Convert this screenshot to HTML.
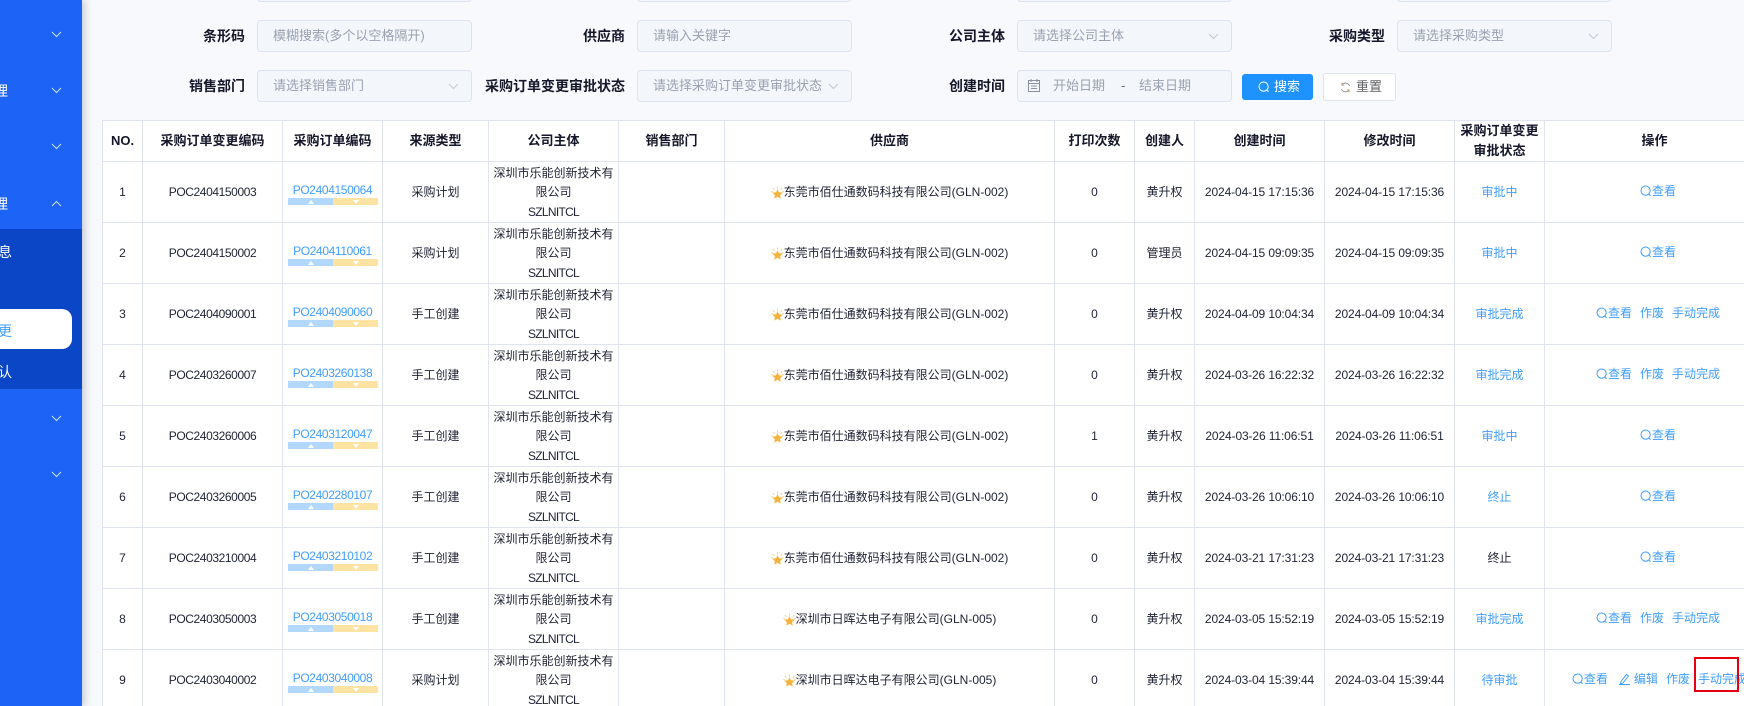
<!DOCTYPE html>
<html lang="zh"><head><meta charset="utf-8"><title>采购订单变更</title>
<style>
*{box-sizing:border-box}
html,body{margin:0;padding:0;width:1744px;height:706px;overflow:hidden;background:#f7f9fc;font-family:"Liberation Sans","Noto Sans CJK SC",sans-serif;color:#1f2233}
#wrap{position:relative;width:1744px;height:706px;overflow:hidden;background:#f7f9fc}
#side{position:absolute;left:0;top:0;width:82px;height:706px;background:#1d63f6;box-shadow:2px 0 8px rgba(40,50,80,.28);overflow:hidden;z-index:3}
#side .sub{position:absolute;left:0;top:229px;width:82px;height:160px;background:#0b46c6}
#side .pill{position:absolute;left:-20px;top:309px;width:92px;height:40px;background:#fff;border-radius:10px}
#side span{position:absolute;font-size:14px;line-height:20px;color:#fff}
#side svg{position:absolute;left:51px;width:11px;height:7px}
.lb{position:absolute;font-size:14px;font-weight:700;line-height:20px;text-align:right;white-space:nowrap;color:#15172a}
.in{position:absolute;width:215px;height:32px;background:#f3f6fb;border:1px solid #dce3f1;border-radius:4px;font-size:13px;line-height:30px;padding-left:15px;color:#9aa1b2;white-space:nowrap}
.in svg.c{position:absolute;right:12px;top:12px;width:11px;height:7px}
.btn{position:absolute;font-size:13px;line-height:26px;border-radius:3px}
table{position:absolute;left:102px;top:120px;width:1663px;table-layout:fixed;border-collapse:separate;border-spacing:0;background:#fff;border-left:1px solid #dfe4f0;border-top:1px solid #dfe4f0}
th,td{border-right:1px solid #dfe4f0;border-bottom:1px solid #dfe4f0;padding:0;text-align:center;font-size:12px;position:relative;line-height:20px;overflow:hidden}
th{font-size:13px;font-weight:700;height:41px;color:#15172a}
td{height:61px;padding-top:1.500px;line-height:19.500px}
td:nth-child(2){letter-spacing:-.4px}
td:nth-child(10),td:nth-child(11){letter-spacing:-.12px}
.z{letter-spacing:-.7px}
.po{position:absolute;left:0;right:0;top:18px;color:#409eff;line-height:20px;font-size:12px;letter-spacing:-.38px}
.bar{position:absolute;left:5px;top:36px;width:90px;height:7px;background:linear-gradient(90deg,#b3d8ff 50%,#ffe3a3 50%)}
.bar:before,.bar:after{content:"";position:absolute;top:1.500px;border-left:3px solid transparent;border-right:3px solid transparent}
.bar:before{left:20px;border-bottom:4px solid #fff}
.bar:after{left:65px;border-top:4px solid #fff}
.st{color:#409eff}
.star{width:13px;height:13px;vertical-align:-3px;margin-right:0}
td.op{text-align:left;white-space:nowrap;color:#409eff;line-height:20px}
td.op div{position:absolute;top:19px;white-space:nowrap}
td.op a{margin-right:8px}
td.op svg{width:12px;height:12px;vertical-align:-2px;margin-right:0}
#red{position:absolute;left:1694px;top:657px;width:45px;height:35px;border:2px solid #e60012;z-index:4}
</style></head><body>
<div id="wrap">
<svg width="0" height="0" style="position:absolute"><defs>
<symbol id="q" viewBox="0 0 12 12"><circle cx="5.600" cy="5.600" r="4.600" fill="none" stroke="currentColor" stroke-width="1"/><path d="M8.800 9l1.800 1.800" stroke="currentColor" stroke-width="1" fill="none"/></symbol>
<symbol id="s" viewBox="0 0 13 13"><path d="M6.500 3.200l1.500 3 3.800.4-2.700 2.500.7 3.500-3.300-1.800-3.300 1.800.7-3.500L1.200 6.600 5 6.200z" fill="#f5b23d"/><path d="M6.500 .4v2.200M1.800 2l1.500 1.800M11.200 2L9.700 3.800M.3 5.400l1.700.6M12.700 5.400L11 6" stroke="#fad48a" stroke-width="1" fill="none"/></symbol>
<symbol id="d" viewBox="0 0 11 7"><path d="M1 1l4.500 4.500L10 1" fill="none" stroke="currentColor" stroke-width="1"/></symbol>
</defs></svg>

<div id="side">
<div class="sub"></div><div class="pill"></div>
<span style="left:-6px;top:81px">理</span>
<span style="left:-6px;top:194px">理</span>
<span style="left:-2px;top:242px">息</span>
<span style="left:-2px;top:321px;color:#409eff">更</span>
<span style="left:-2px;top:362px">认</span>
<svg viewBox="0 0 11 7" style="top:31px;color:#cfe0ff"><use href="#d"/></svg>
<svg viewBox="0 0 11 7" style="top:87px;color:#cfe0ff"><use href="#d"/></svg>
<svg viewBox="0 0 11 7" style="top:143px;color:#cfe0ff"><use href="#d"/></svg>
<svg viewBox="0 0 11 7" style="top:200px;color:#cfe0ff;transform:scaleY(-1)"><use href="#d"/></svg>
<svg viewBox="0 0 11 7" style="top:415px;color:#cfe0ff"><use href="#d"/></svg>
<svg viewBox="0 0 11 7" style="top:471px;color:#cfe0ff"><use href="#d"/></svg>
</div>

<div class="in" style="left:257px;top:-30px"></div>
<div class="in" style="left:637px;top:-30px"></div>
<div class="in" style="left:1017px;top:-30px"></div>
<div class="in" style="left:1397px;top:-30px"></div>

<div class="lb" style="right:1499px;top:26px">条形码</div>
<div class="in" style="left:257px;top:20px">模糊搜索(多个以空格隔开)</div>
<div class="lb" style="right:1119px;top:26px">供应商</div>
<div class="in" style="left:637px;top:20px">请输入关键字</div>
<div class="lb" style="right:739px;top:26px">公司主体</div>
<div class="in" style="left:1017px;top:20px">请选择公司主体<svg class="c" style="color:#c3c8d4"><use href="#d"/></svg></div>
<div class="lb" style="right:359px;top:26px">采购类型</div>
<div class="in" style="left:1397px;top:20px">请选择采购类型<svg class="c" style="color:#c3c8d4"><use href="#d"/></svg></div>

<div class="lb" style="right:1499px;top:76px">销售部门</div>
<div class="in" style="left:257px;top:70px">请选择销售部门<svg class="c" style="color:#c3c8d4"><use href="#d"/></svg></div>
<div class="lb" style="right:1119px;top:76px">采购订单变更审批状态</div>
<div class="in" style="left:637px;top:70px">请选择采购订单变更审批状态<svg class="c" style="color:#c3c8d4"><use href="#d"/></svg></div>
<div class="lb" style="right:739px;top:76px">创建时间</div>
<div class="in" style="left:1017px;top:70px;padding-left:0">
<svg width="12" height="13" viewBox="0 0 12 13" style="position:absolute;left:10px;top:8px" fill="none" stroke="#8b91a3"><rect x=".5" y="1.500" width="11" height="11"/><path d="M.5 4.500h11M3 0v3M9 0v3M3 7h6M3 9.500h6"/></svg>
<span style="position:absolute;left:35px">开始日期</span><span style="position:absolute;left:103px;color:#666">-</span><span style="position:absolute;left:121px">结束日期</span>
</div>
<div class="btn" style="left:1242px;top:74px;width:71px;height:26px;background:#1e92ff;color:#fff">
<svg width="12" height="12" viewBox="0 0 12 12" style="position:absolute;left:16px;top:7px;color:#fff"><use href="#q"/></svg>
<span style="position:absolute;left:32px">搜索</span></div>
<div class="btn" style="left:1323px;top:73px;width:73px;height:28px;background:#fff;border:1px solid #dfe3ec;color:#606266">
<svg width="11" height="11" viewBox="0 0 12 12" style="position:absolute;left:16px;top:8px" fill="none" stroke="#8a8f99"><path d="M10.500 4.500A5 5 0 0 0 2 3M1.500 7.500A5 5 0 0 0 10 9"/><path d="M2 .8V3.300h2.500M10 11.200V8.700H7.500" stroke="#c99a5a"/></svg>
<span style="position:absolute;left:32px;top:0">重置</span></div>

<table>
<colgroup><col style="width:40px"><col style="width:140px"><col style="width:100px"><col style="width:106px"><col style="width:130px"><col style="width:106px"><col style="width:330px"><col style="width:80px"><col style="width:60px"><col style="width:130px"><col style="width:130px"><col style="width:90px"><col style="width:220px"></colgroup>
<tr><th>NO.</th><th>采购订单变更编码</th><th>采购订单编码</th><th>来源类型</th><th>公司主体</th><th>销售部门</th><th>供应商</th><th>打印次数</th><th>创建人</th><th>创建时间</th><th>修改时间</th><th>采购订单变更<br>审批状态</th><th>操作</th></tr>

<tr><td>1</td><td>POC2404150003</td><td><div class="po">PO2404150064</div><i class="bar"></i></td><td>采购计划</td><td>深圳市乐能创新技术有<br>限公司<br><span class="z">SZLNITCL</span></td><td></td><td><svg class="star"><use href="#s"/></svg>东莞市佰仕通数码科技有限公司(GLN-002)</td><td>0</td><td>黄升权</td><td>2024-04-15 17:15:36</td><td>2024-04-15 17:15:36</td><td class="st">审批中</td><td class="op"><div style="left:95px"><a><svg><use href="#q"/></svg>查看</a></div></td></tr>

<tr><td>2</td><td>POC2404150002</td><td><div class="po">PO2404110061</div><i class="bar"></i></td><td>采购计划</td><td>深圳市乐能创新技术有<br>限公司<br><span class="z">SZLNITCL</span></td><td></td><td><svg class="star"><use href="#s"/></svg>东莞市佰仕通数码科技有限公司(GLN-002)</td><td>0</td><td>管理员</td><td>2024-04-15 09:09:35</td><td>2024-04-15 09:09:35</td><td class="st">审批中</td><td class="op"><div style="left:95px"><a><svg><use href="#q"/></svg>查看</a></div></td></tr>

<tr><td>3</td><td>POC2404090001</td><td><div class="po">PO2404090060</div><i class="bar"></i></td><td>手工创建</td><td>深圳市乐能创新技术有<br>限公司<br><span class="z">SZLNITCL</span></td><td></td><td><svg class="star"><use href="#s"/></svg>东莞市佰仕通数码科技有限公司(GLN-002)</td><td>0</td><td>黄升权</td><td>2024-04-09 10:04:34</td><td>2024-04-09 10:04:34</td><td class="st">审批完成</td><td class="op"><div style="left:51px"><a><svg><use href="#q"/></svg>查看</a><a>作废</a><a>手动完成</a></div></td></tr>

<tr><td>4</td><td>POC2403260007</td><td><div class="po">PO2403260138</div><i class="bar"></i></td><td>手工创建</td><td>深圳市乐能创新技术有<br>限公司<br><span class="z">SZLNITCL</span></td><td></td><td><svg class="star"><use href="#s"/></svg>东莞市佰仕通数码科技有限公司(GLN-002)</td><td>0</td><td>黄升权</td><td>2024-03-26 16:22:32</td><td>2024-03-26 16:22:32</td><td class="st">审批完成</td><td class="op"><div style="left:51px"><a><svg><use href="#q"/></svg>查看</a><a>作废</a><a>手动完成</a></div></td></tr>

<tr><td>5</td><td>POC2403260006</td><td><div class="po">PO2403120047</div><i class="bar"></i></td><td>手工创建</td><td>深圳市乐能创新技术有<br>限公司<br><span class="z">SZLNITCL</span></td><td></td><td><svg class="star"><use href="#s"/></svg>东莞市佰仕通数码科技有限公司(GLN-002)</td><td>1</td><td>黄升权</td><td>2024-03-26 11:06:51</td><td>2024-03-26 11:06:51</td><td class="st">审批中</td><td class="op"><div style="left:95px"><a><svg><use href="#q"/></svg>查看</a></div></td></tr>

<tr><td>6</td><td>POC2403260005</td><td><div class="po">PO2402280107</div><i class="bar"></i></td><td>手工创建</td><td>深圳市乐能创新技术有<br>限公司<br><span class="z">SZLNITCL</span></td><td></td><td><svg class="star"><use href="#s"/></svg>东莞市佰仕通数码科技有限公司(GLN-002)</td><td>0</td><td>黄升权</td><td>2024-03-26 10:06:10</td><td>2024-03-26 10:06:10</td><td class="st">终止</td><td class="op"><div style="left:95px"><a><svg><use href="#q"/></svg>查看</a></div></td></tr>

<tr><td>7</td><td>POC2403210004</td><td><div class="po">PO2403210102</div><i class="bar"></i></td><td>手工创建</td><td>深圳市乐能创新技术有<br>限公司<br><span class="z">SZLNITCL</span></td><td></td><td><svg class="star"><use href="#s"/></svg>东莞市佰仕通数码科技有限公司(GLN-002)</td><td>0</td><td>黄升权</td><td>2024-03-21 17:31:23</td><td>2024-03-21 17:31:23</td><td>终止</td><td class="op"><div style="left:95px"><a><svg><use href="#q"/></svg>查看</a></div></td></tr>

<tr><td>8</td><td>POC2403050003</td><td><div class="po">PO2403050018</div><i class="bar"></i></td><td>手工创建</td><td>深圳市乐能创新技术有<br>限公司<br><span class="z">SZLNITCL</span></td><td></td><td><svg class="star"><use href="#s"/></svg>深圳市日晖达电子有限公司(GLN-005)</td><td>0</td><td>黄升权</td><td>2024-03-05 15:52:19</td><td>2024-03-05 15:52:19</td><td class="st">审批完成</td><td class="op"><div style="left:51px"><a><svg><use href="#q"/></svg>查看</a><a>作废</a><a>手动完成</a></div></td></tr>

<tr><td>9</td><td>POC2403040002</td><td><div class="po">PO2403040008</div><i class="bar"></i></td><td>采购计划</td><td>深圳市乐能创新技术有<br>限公司<br><span class="z">SZLNITCL</span></td><td></td><td><svg class="star"><use href="#s"/></svg>深圳市日晖达电子有限公司(GLN-005)</td><td>0</td><td>黄升权</td><td>2024-03-04 15:39:44</td><td>2024-03-04 15:39:44</td><td class="st">待审批</td><td class="op"><div style="left:27px"><a style="margin-right:10px"><svg><use href="#q"/></svg>查看</a><a><svg viewBox="0 0 14 12" style="width:14px;margin-right:2px" fill="none" stroke="currentColor"><path d="M3 8.500L8.500 1.500l2 1.500L5 10l-2.500.8zM1 11.500h11"/></svg>编辑</a><a>作废</a><a>手动完成</a></div></td></tr>
</table>
<div id="red"></div>
</div>
</body></html>
